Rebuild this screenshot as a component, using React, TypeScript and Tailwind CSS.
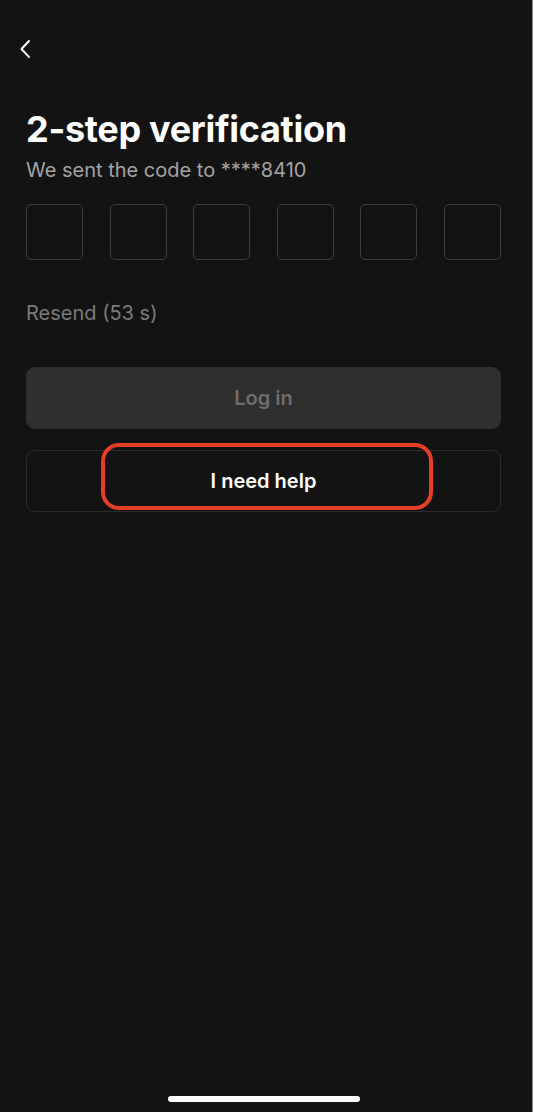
import React from "react";

const font = { fontFamily: "Inter, 'Noto Sans', sans-serif" };

function OtpBoxes() {
  return (
    <div className="mt-[22px] flex justify-between">
      {[0, 1, 2, 3, 4, 5].map((i) => (
        <div
          key={i}
          className="h-[56px] w-[57px] rounded-[5px] border-[1.5px] border-[#3d3d3d]"
        />
      ))}
    </div>
  );
}

export default function App() {
  return (
    <div className="flex h-[1112px] w-[536px] overflow-hidden bg-white" style={font}>
      <div className="relative flex h-full w-[532px] flex-col bg-[#131313] pl-[26px] pr-[31px]">
        <button className="mt-[39px] -ml-[11px] flex h-[20px] w-[20px] items-center justify-center">
          <svg width="12" height="20" viewBox="0 0 12 20" fill="none">
            <path
              d="M10 2 L2.5 10 L10 18"
              stroke="#ffffff"
              strokeWidth="2"
              strokeLinecap="round"
              strokeLinejoin="round"
            />
          </svg>
        </button>

        <h1 className="mt-[48px] text-[36px] font-bold leading-[44px] tracking-[-0.3px] text-white">
          2-step verification
        </h1>
        <p className="mt-[7px] text-[20px] leading-[24px] text-[#a3a3a3]">
          We sent the code to ****8410
        </p>

        <OtpBoxes />

        <p className="mt-[41px] text-[20px] leading-[24px] text-[#7b7b7b]">Resend (53 s)</p>

        <button className="mt-[42px] flex h-[62px] w-full items-center justify-center rounded-[9px] bg-[#2f2f2f] text-[20px] font-semibold text-[#6e6e6e]">
          Log in
        </button>

        <div className="relative mt-[21px]">
          <button className="flex h-[62px] w-full items-center justify-center rounded-[9px] border border-[#2c2c2c] text-[20px] font-semibold text-white">
            I need help
          </button>
          <div className="pointer-events-none absolute left-[75px] top-[-7px] h-[67px] w-[332px] rounded-[18px] border-4 border-[#e43f26]" />
        </div>

        <div className="mb-[10px] ml-[142px] mt-auto h-[6px] w-[192px] self-start rounded-full bg-white" />
      </div>
      <div className="h-full w-[4px] border-l border-[#8a8a8a] bg-white" />
    </div>
  );
}
